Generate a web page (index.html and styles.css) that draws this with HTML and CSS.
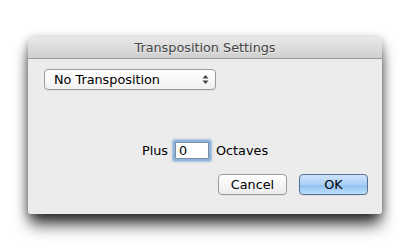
FILE: index.html
```html
<!DOCTYPE html>
<html>
<head>
<meta charset="utf-8">
<link rel="stylesheet" href="styles.css">
</head>
<body>
<div class="window">
  <div class="titlebar">Transposition Settings</div>
  <div class="content">
    <div class="popup">
      <span class="popup-label">No Transposition</span>
      <svg class="arrows" width="7" height="11" viewBox="0 0 7 11">
        <path d="M3.5 1 L6.5 4.5 L0.5 4.5 Z" fill="#444"/>
        <path d="M3.5 10 L6.5 6.5 L0.5 6.5 Z" fill="#444"/>
      </svg>
    </div>
    <div class="octave-row">
      <span class="label">Plus</span>
      <div class="field"><span>0</span></div>
      <span class="label">Octaves</span>
    </div>
    <div class="buttons">
      <button class="btn">Cancel</button>
      <button class="btn default">OK</button>
    </div>
  </div>
</div>
</body>
</html>
```
FILE: styles.css
```css
html, body {
  margin: 0;
  padding: 0;
  background: #ffffff;
}
body {
  padding: 37px 0 37px 28px;
  font-family: "DejaVu Sans", "Liberation Sans", sans-serif;
  font-size: 12.8px;
  color: #000;
}
.window {
  width: 354px;
  height: 177px;
  border-radius: 5px 5px 3px 3px;
  background: #ececec;
  box-shadow: 0 12px 16px -2px rgba(0,0,0,0.8), 0 2px 10px rgba(0,0,0,0.35);
  display: flex;
  flex-direction: column;
  overflow: hidden;
}
.titlebar {
  height: 21px;
  line-height: 21px;
  text-align: center;
  font-size: 12.8px;
  color: #444;
  background: linear-gradient(#e9e9e9, #cfcfcf);
  border-bottom: 1px solid #9a9a9a;
  text-shadow: 0 1px 0 rgba(255,255,255,0.5);
  flex: none;
}
.content {
  flex: 1;
  display: flex;
  flex-direction: column;
  padding: 10px 14px 12px 16px;
}
.popup {
  width: 155px;
  height: 19px;
  border: 1px solid #9b9b9b;
  border-radius: 4px;
  background: linear-gradient(#ffffff, #f1f1f1);
  box-shadow: 0 1px 0 rgba(0,0,0,0.06);
  display: flex;
  align-items: center;
  justify-content: space-between;
  padding: 0 6px 0 9px;
  box-sizing: content-box;
}
.popup-label {
  font-size: 12.8px;
}
.arrows {
  display: block;
}
.octave-row {
  margin-top: 52px;
  display: flex;
  align-items: center;
  justify-content: center;
  gap: 5px;
  padding-right: 2px;
}
.label {
  font-size: 12.8px;
}
.field {
  width: 34px;
  height: 17px;
  background: #fff;
  border: 1px solid #7b8ea3;
  box-shadow: 0 0 0 2px #8cb4de, 0 0 2px 3px rgba(100,150,210,0.5);
  border-radius: 1px;
  display: flex;
  align-items: center;
  padding-left: 3px;
  box-sizing: border-box;
  margin: 0 2px;
}
.field span {
  font-size: 12.8px;
}
.buttons {
  margin-top: 15px;
  display: flex;
  justify-content: flex-end;
  gap: 12px;
}
.btn {
  width: 69px;
  height: 21px;
  border: 1px solid #9a9a9a;
  border-radius: 4px;
  background: linear-gradient(#ffffff, #ececec);
  font-family: "DejaVu Sans", "Liberation Sans", sans-serif;
  font-size: 12.8px;
  color: #000;
  padding: 0;
  box-shadow: 0 1px 0 rgba(0,0,0,0.05);
}
.btn.default {
  border-color: #5a6f92;
  background: linear-gradient(#cfe4fb 0%, #a9cff5 50%, #8ebff0 51%, #bde0fb 100%);
}
```
